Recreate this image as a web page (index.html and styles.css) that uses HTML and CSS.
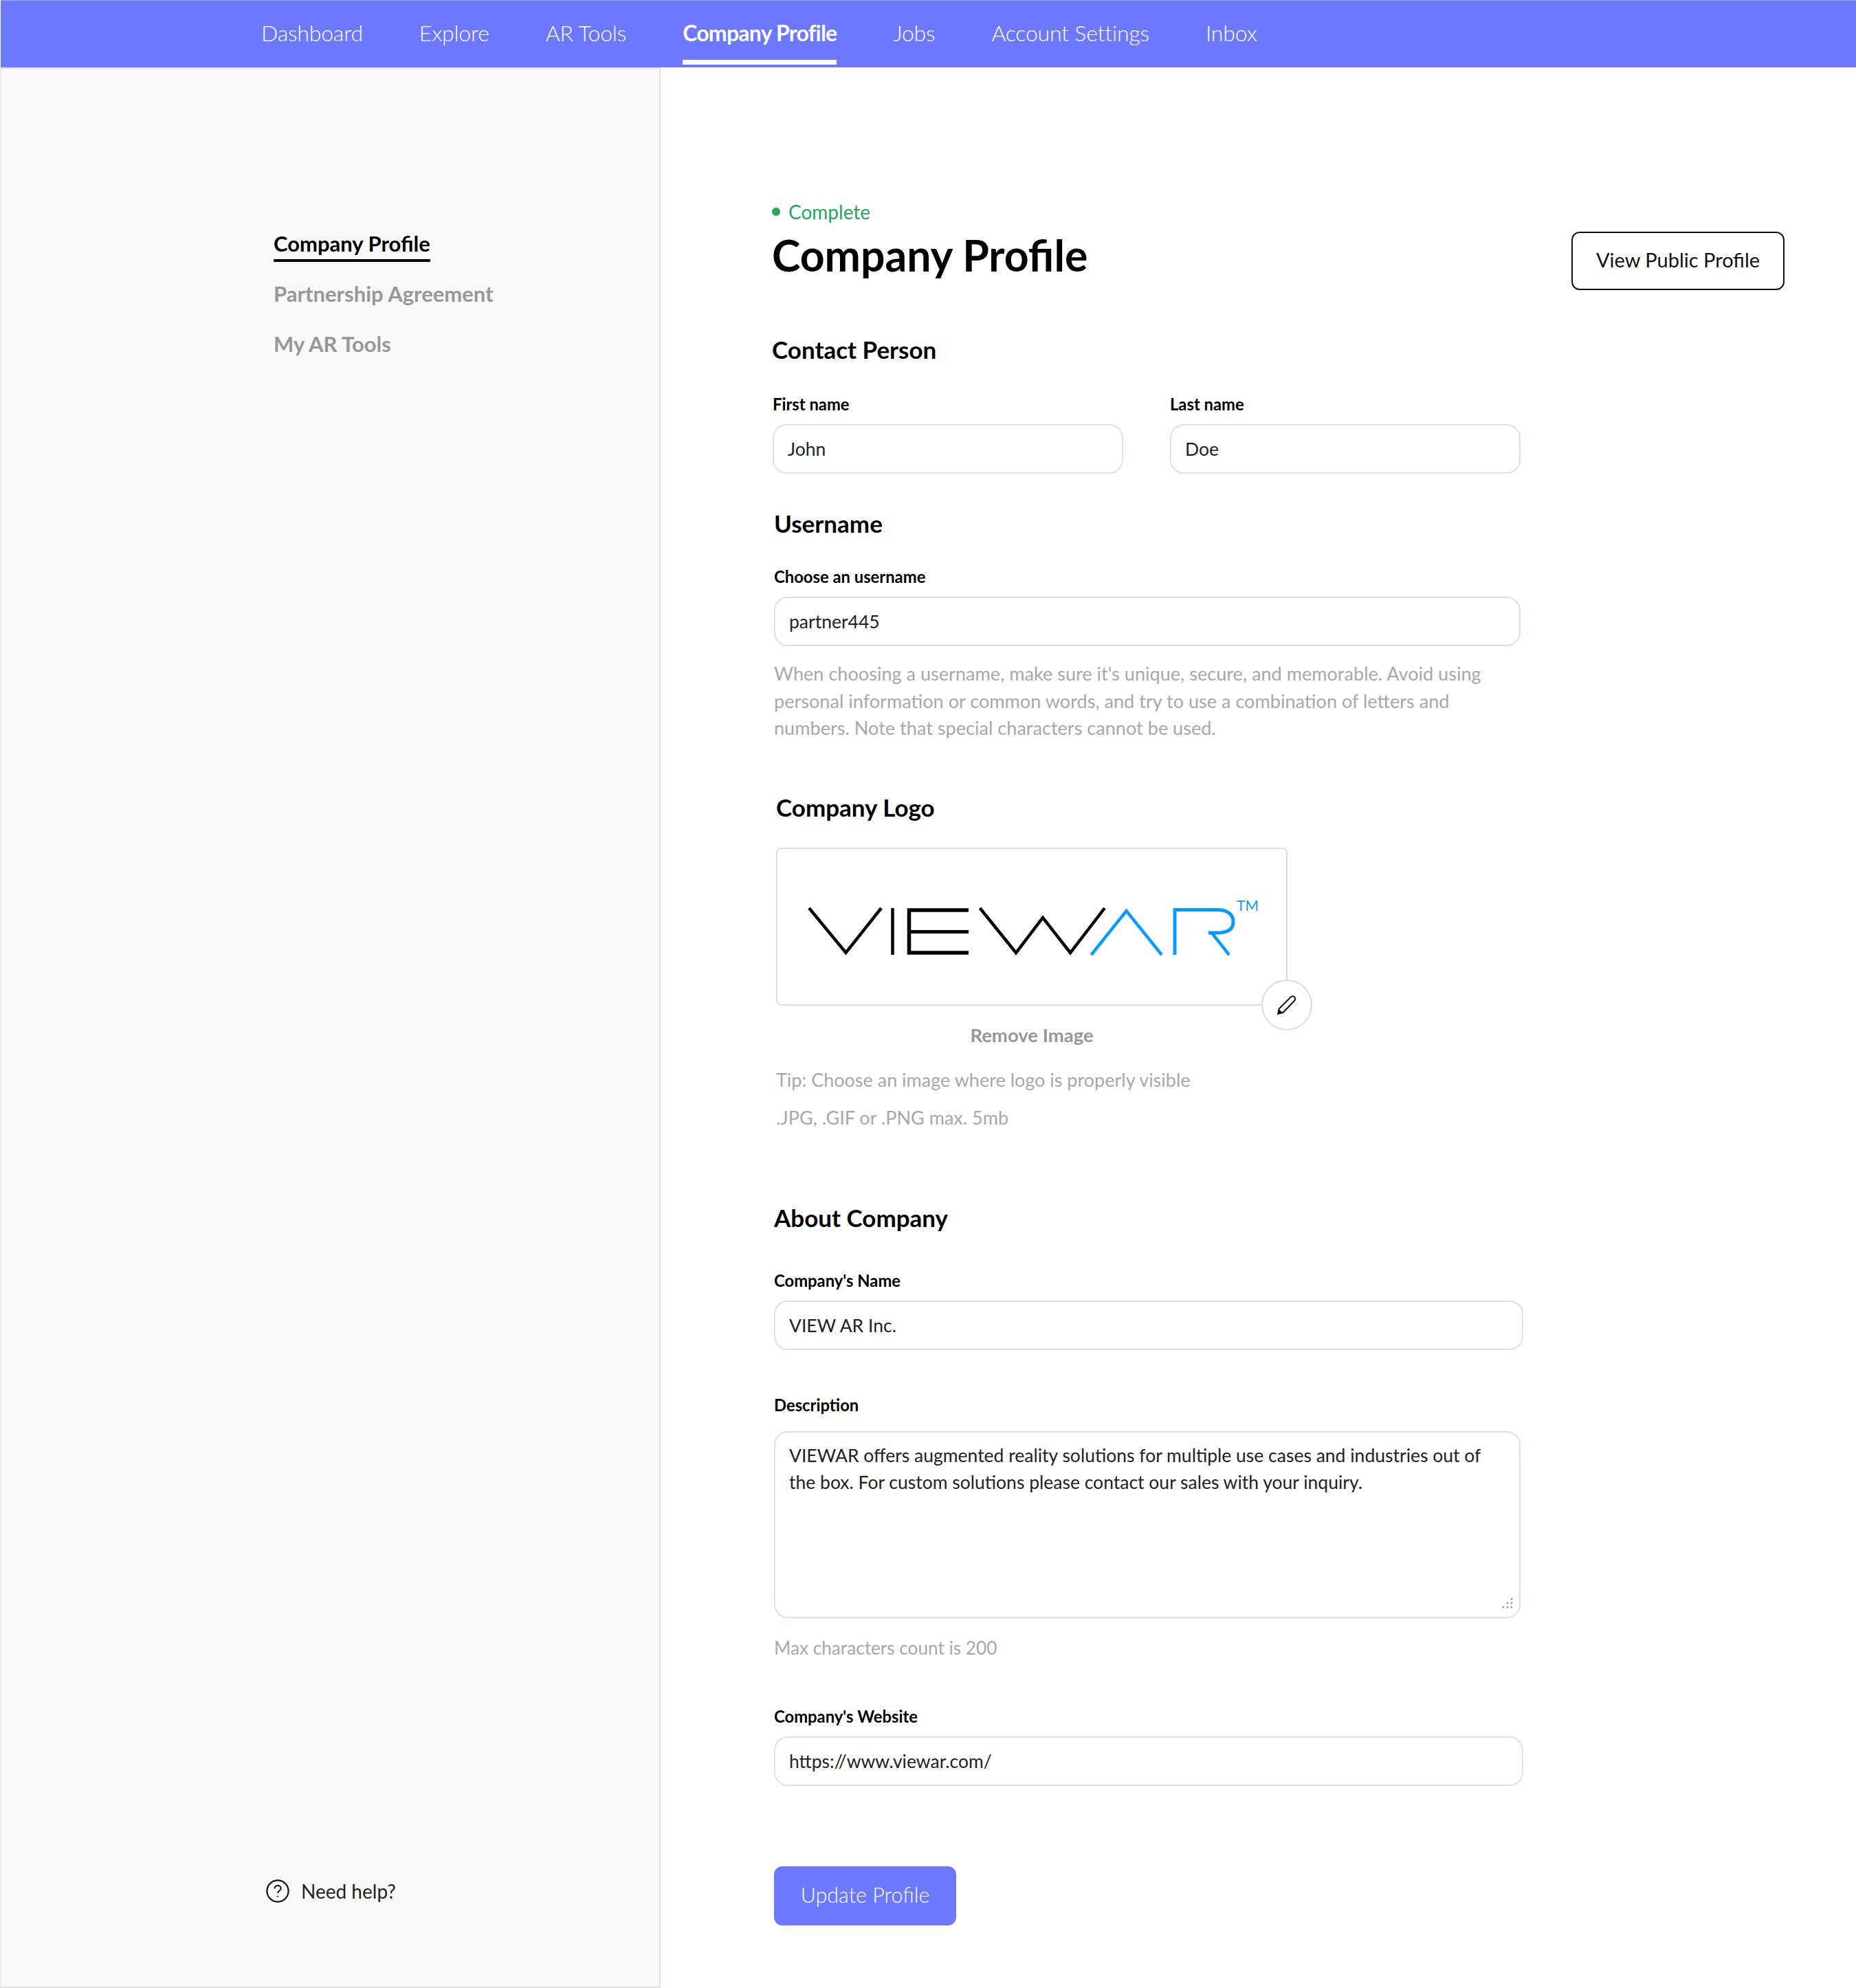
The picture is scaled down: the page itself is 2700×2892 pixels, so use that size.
FILE: index.html
```html
<!DOCTYPE html>
<html lang="en">

<head>
    <meta charset="UTF-8">
    <meta name="viewport" content="width=device-width, initial-scale=1.0">
    <title>Company Profile</title>
    <link rel="stylesheet" href="styles.css">
</head>

<body>
    <nav class="topbar">
        <a href="#">Dashboard</a>
        <a href="#">Explore</a>
        <a href="#">AR Tools</a>
        <a href="#" class="active">Company Profile</a>
        <a href="#">Jobs</a>
        <a href="#">Account Settings</a>
        <a href="#">Inbox</a>
    </nav>

    <div class="layout">
        <aside class="sidebar">
            <div class="side-links">
                <a href="#" class="active">Company Profile</a>
                <a href="#">Partnership Agreement</a>
                <a href="#">My AR Tools</a>
            </div>
            <a href="#" class="help">
                <svg width="34" height="34" viewBox="0 0 34 34" fill="none" stroke="#111" stroke-width="2.2">
                    <circle cx="17" cy="17" r="15.6" />
                    <path d="M12.4 13.6c0-2.8 2.1-4.5 4.7-4.5s4.6 1.7 4.6 4c0 3.4-4.6 3.300-4.600 7" stroke-width="2" />
                    <circle cx="17" cy="25" r="1" fill="#111" stroke="none" />
                </svg>
                <span>Need help?</span>
            </a>
        </aside>

        <main class="content">
            <div class="page-head">
                <div>
                    <div class="status"><span class="dot"></span>Complete</div>
                    <h1>Company Profile</h1>
                </div>
                <a href="#" class="btn-outline">View Public Profile</a>
            </div>

            <section class="form-block contact">
                <h2>Contact Person</h2>
                <div class="two-cols">
                    <div>
                        <label>First name</label>
                        <input type="text" value="John">
                    </div>
                    <div>
                        <label>Last name</label>
                        <input type="text" value="Doe">
                    </div>
                </div>
            </section>

            <section class="form-block username">
                <h2>Username</h2>
                <label>Choose an username</label>
                <input type="text" value="partner445">
                <p class="hint">When choosing a username, make sure it's unique, secure, and memorable. Avoid using
                    personal information or common words, and try to use a combination of letters and
                    numbers. Note that special characters cannot be used.</p>
            </section>

            <section class="form-block logo-block">
                <h2>Company Logo</h2>
                <div class="logo-box">
                    <svg class="logo-art" width="742" height="228" viewBox="0 0 742 228" fill="none" stroke-width="4.500">
                        <title>VIEWAR</title>
                        <g stroke="#000">
                            <polyline points="46,86 99.500,151 151,86" />
                            <line x1="167.500" y1="86" x2="167.500" y2="154" />
                            <polyline points="278,89 191.500,89 191.500,151 278,151" stroke-width="5.500" />
                            <line x1="191.500" y1="120.500" x2="278" y2="120.500" stroke-width="5" />
                            <polyline points="294.500,86 347,151 386,100 426,151 476,86" />
                        </g>
                        <g stroke="#0a9bff">
                            <polyline points="456.500,154 507.600,90 559,154" />
                            <path d="M578 154V88.500H640c15 0 23 7 23 17.500s-8 16-23 16H627" stroke-width="5" />
                            <line x1="631" y1="121" x2="657" y2="154" />
                        </g>
                        <text x="668" y="90" class="logo-tm">TM</text>
                    </svg>
                    <button class="edit-btn" type="button">
                        <svg width="30" height="30" viewBox="0 0 30 30" fill="none" stroke="#111" stroke-width="2">
                            <path d="M2.500 27.500l1.200-7L20.500 3.600c1.800-1.800 4.200-1.600 5.600-.2s1.600 3.800-.2 5.600L9.500 26z" />
                            <path d="M2.500 27.500l1.200-5 3.800 3.700z" fill="#111" />
                        </svg>
                    </button>
                </div>
                <a href="#" class="remove-link">Remove Image</a>
                <p class="tip">Tip: Choose an image where logo is properly visible</p>
                <p class="tip tip-formats">.JPG, .GIF or .PNG max. 5mb</p>
            </section>

            <section class="form-block about">
                <h2>About Company</h2>
                <label>Company's Name</label>
                <input type="text" class="wide" value="VIEW AR Inc.">

                <label class="label-desc">Description</label>
                <div class="area-wrap">
                    <textarea rows="6">VIEWAR offers augmented reality solutions for multiple use cases and industries out of the box. For custom solutions please contact our sales with your inquiry.</textarea>
                    <svg class="grip" width="16" height="16" viewBox="0 0 16 16" fill="#999">
                        <circle cx="14" cy="2" r="1.500" />
                        <circle cx="8" cy="8" r="1.500" />
                        <circle cx="14" cy="8" r="1.500" />
                        <circle cx="2" cy="14" r="1.500" />
                        <circle cx="8" cy="14" r="1.500" />
                        <circle cx="14" cy="14" r="1.500" />
                    </svg>
                </div>
                <p class="max-count">Max characters count is 200</p>

                <label class="label-site">Company's Website</label>
                <input type="text" class="wide" value="https://www.viewar.com/">

                <button class="btn-primary" type="button">Update Profile</button>
            </section>
        </main>
    </div>
</body>

</html>
```

FILE: styles.css
```css
* {
    box-sizing: border-box;
}

body {
    margin: 0;
    font-family: Lato, "Open Sans", Arial, sans-serif;
    color: #000;
    background: #fff;
    min-height: 100vh;
    display: flex;
    flex-direction: column;
}

a {
    text-decoration: none;
    color: inherit;
}

h1,
h2,
p {
    margin: 0;
}

/* top navigation */
.topbar {
    height: 98px;
    margin-left: 1px;
    padding-left: 379px;
    display: flex;
    gap: 82px;
    background: #6c79ff;
    border-top: 1px solid #a3abff;
}

.topbar a {
    height: 93px;
    line-height: 94px;
    font-size: 32px;
    font-weight: 300;
    letter-spacing: -0.2px;
    color: #fff;
    border-bottom: 7px solid transparent;
}

.topbar a.active {
    font-weight: 700;
    letter-spacing: -0.75px;
    border-bottom-color: #fff;
}

.layout {
    flex: 1;
    display: flex;
}

/* left column */
.sidebar {
    width: 961px;
    flex-shrink: 0;
    padding: 234px 0 120px 397px;
    display: flex;
    flex-direction: column;
    justify-content: space-between;
    background: #f9f9f9;
    border: 2px solid #e2e2e2;
    border-width: 2px 2px 2px 1px;
}

.side-links {
    display: flex;
    flex-direction: column;
    align-items: flex-start;
    gap: 26px;
}

.side-links a {
    line-height: 40px;
    padding-bottom: 3px;
    font-size: 31px;
    font-weight: 700;
    color: #979797;
    border-bottom: 4px solid transparent;
}

.side-links a.active {
    color: #000;
    border-bottom-color: #000;
}

.help {
    margin-left: -11px;
    display: flex;
    align-items: center;
    gap: 17px;
    line-height: 38px;
    font-size: 28px;
    color: #222;
}

/* main column */
.content {
    flex: 1;
    padding: 192px 104px 0 162px;
}

.page-head {
    display: flex;
    justify-content: space-between;
    align-items: flex-start;
}

.status {
    display: flex;
    align-items: center;
    line-height: 36px;
    font-size: 28px;
    font-weight: 400;
    color: #27a55d;
}

.dot {
    width: 12px;
    height: 12px;
    margin-right: 12px;
    border-radius: 50%;
    background: #27a55d;
}

h1 {
    margin-top: 10px;
    line-height: 70px;
    font-size: 62.500px;
    font-weight: 700;
}

.btn-outline {
    width: 310px;
    height: 85px;
    margin-top: 47px;
    text-align: center;
    line-height: 78px;
    font-size: 29px;
    font-weight: 400;
    color: #111;
    border: 2px solid #111;
    border-radius: 12px;
}

h2 {
    line-height: 40px;
    font-size: 35px;
    font-weight: 700;
}

label {
    display: block;
    margin-top: 42px;
    line-height: 30px;
    font-size: 23.800px;
    font-weight: 700;
}

input,
textarea {
    display: block;
    width: 1086px;
    margin-top: 14px;
    padding: 0 20px;
    font-family: inherit;
    font-size: 26.500px;
    color: #222;
    border: 2px solid #d9e2ef;
    border-radius: 20px;
    outline: none;
    background: #fff;
}

input {
    height: 72px;
}

input.wide {
    width: 1090px;
}

.form-block {
    width: 1090px;
}

.contact {
    margin-top: 66px;
}

.contact label {
    margin-top: 45px;
}

.two-cols {
    display: flex;
    gap: 68px;
}

.two-cols > div:first-child {
    margin-left: 1px;
}

.two-cols input {
    width: 510px;
}

.username {
    margin: 52px 0 0 3px;
}

.username label {
    margin-top: 43px;
}

.hint {
    width: 1086px;
    margin-top: 20px;
    line-height: 39.500px;
    font-size: 27.100px;
    font-weight: 400;
    color: #a8a8a8;
}

.logo-block {
    margin: 75px 0 0 6px;
}

.logo-box {
    position: relative;
    width: 744px;
    height: 230px;
    margin-top: 39px;
    border: 2px solid #dedede;
    border-radius: 8px;
}

.logo-art {
    display: block;
}

.logo-tm {
    font-size: 21px;
    font-weight: 400;
    fill: #0a9bff;
}

.edit-btn {
    position: absolute;
    right: -38px;
    bottom: -38px;
    width: 74px;
    height: 74px;
    padding: 0;
    display: flex;
    align-items: center;
    justify-content: center;
    background: #fff;
    border: 2px solid #dedede;
    border-radius: 50%;
}

.remove-link {
    display: block;
    width: 744px;
    margin-top: 28px;
    text-align: center;
    line-height: 30px;
    font-size: 27.500px;
    font-weight: 700;
    color: #979797;
}

.tip {
    margin-top: 30px;
    line-height: 40px;
    font-size: 27px;
    font-weight: 400;
    color: #a8a8a8;
}

.tip-formats {
    margin-top: 15px;
}

.about {
    margin: 105px 0 0 3px;
}

.about label {
    margin-top: 57px;
}

.about .label-desc,
.about .label-site {
    margin-top: 65px;
}

.area-wrap {
    position: relative;
    margin-top: 23px;
}

.area-wrap textarea {
    height: 272px;
    margin: 0;
    padding: 14px 20px;
    line-height: 39.500px;
    resize: none;
}

.grip {
    position: absolute;
    left: 1059px;
    top: 242px;
}

.max-count {
    margin-top: 23px;
    line-height: 40px;
    font-size: 26.200px;
    font-weight: 400;
    color: #a8a8a8;
}

.btn-primary {
    display: block;
    width: 265px;
    height: 86px;
    margin-top: 117px;
    padding-bottom: 4px;
    font-family: inherit;
    font-size: 30.500px;
    font-weight: 300;
    color: #fff;
    background: #6c79ff;
    border: none;
    border-radius: 12px;
}
```
